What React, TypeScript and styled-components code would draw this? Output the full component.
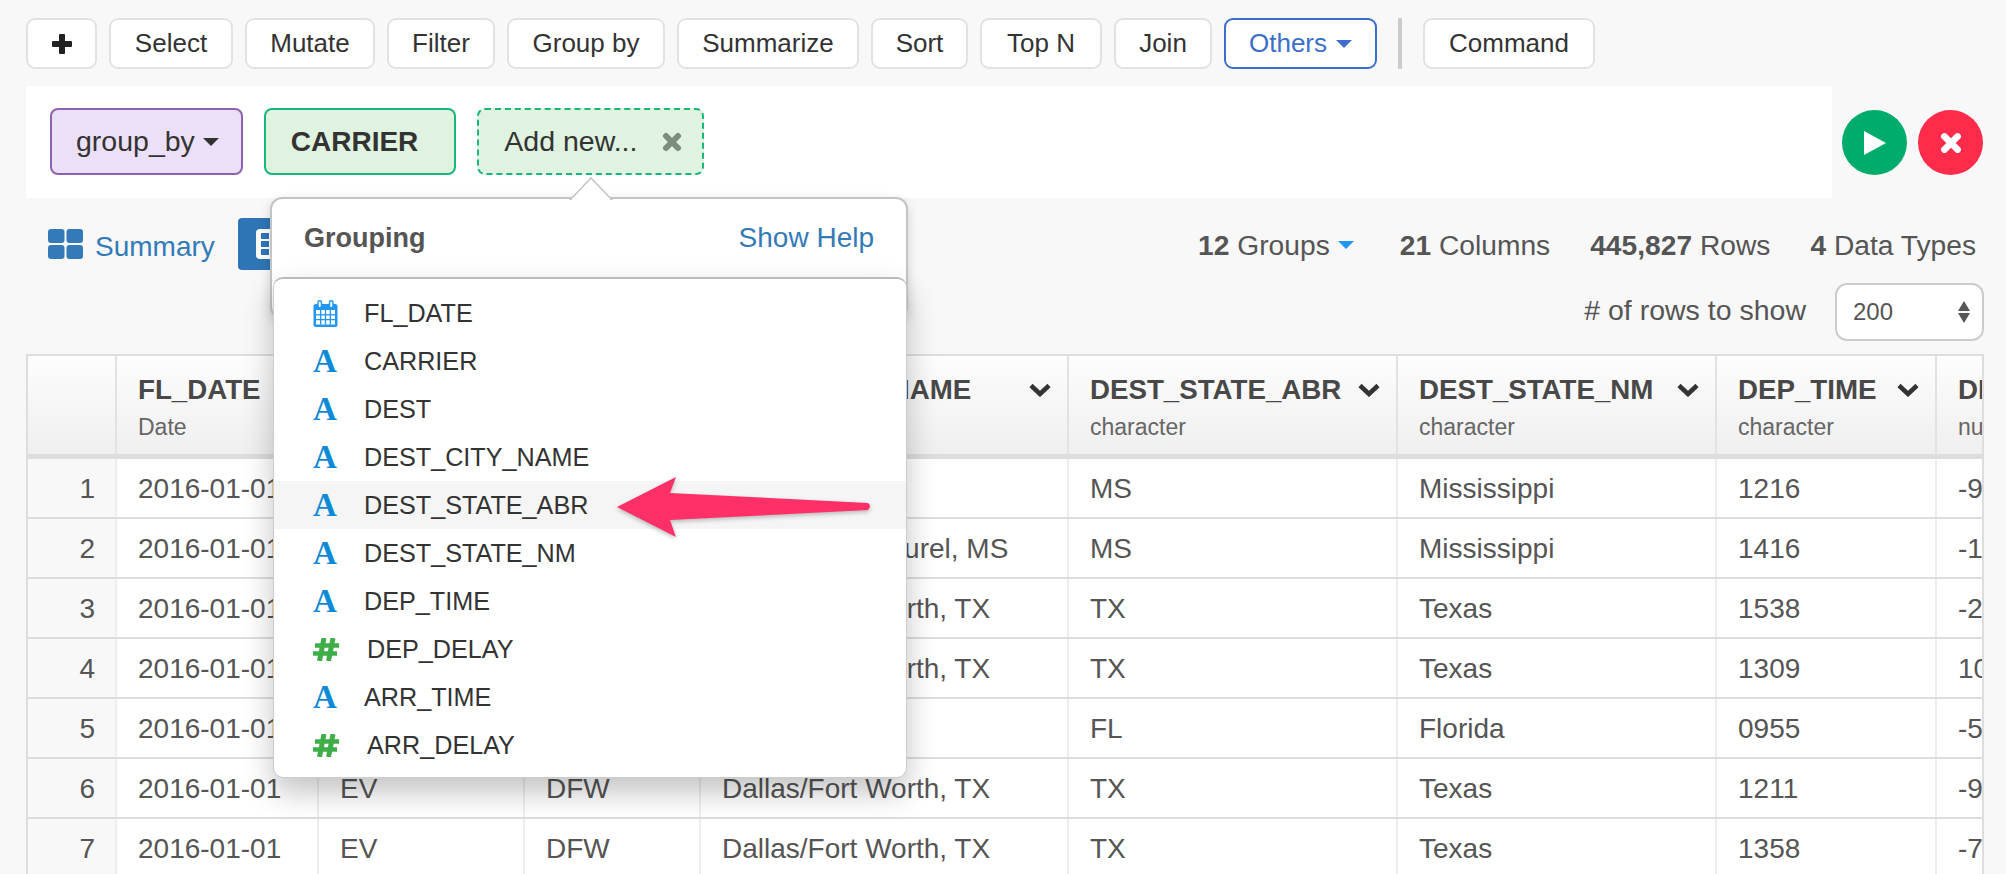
import styled, { createGlobalStyle } from "styled-components";

const GlobalStyle = createGlobalStyle`
    html, body {
        margin: 0;
        padding: 0;
        background: #f8f8f8;
    }
    body {
        font-family: "Liberation Sans", Arial, sans-serif;
        color: #333;
    }
`;

const Page = styled.div`
    position: relative;
    width: 2006px;
    height: 874px;
    overflow: hidden;
    padding: 18px 22px 0 26px;
    box-sizing: border-box;
`;

const Toolbar = styled.div`
    display: flex;
    align-items: stretch;
    gap: 12px;
    height: 51px;
`;

const ToolButton = styled.div<{ $width: number; $active?: boolean }>`
    display: flex;
    align-items: center;
    justify-content: center;
    gap: 9px;
    width: ${(p) => p.$width}px;
    box-sizing: border-box;
    background: #fff;
    border: 2px solid ${(p) => (p.$active ? "#3a6fc9" : "#e2e2e2")};
    border-radius: 9px;
    font-size: 26px;
    color: ${(p) => (p.$active ? "#3a6fc9" : "#333")};
`;

const ToolDivider = styled.div`
    width: 4px;
    margin: 0 9px;
    background: #ccc;
`;

const Caret = styled.span<{ $color: string }>`
    display: inline-block;
    width: 0;
    height: 0;
    border-left: 8px solid transparent;
    border-right: 8px solid transparent;
    border-top: 8px solid ${(p) => p.$color};
`;

const EditRow = styled.div`
    display: flex;
    gap: 10px;
    margin-top: 17px;
`;

const EditPanel = styled.div`
    display: flex;
    align-items: flex-start;
    gap: 21px;
    width: 1806px;
    height: 112px;
    padding: 22px 24px;
    box-sizing: border-box;
    background: #fff;
`;

const Token = styled.div<{ $kind: "verb" | "column" | "add" }>`
    display: flex;
    align-items: center;
    height: 67px;
    box-sizing: border-box;
    padding: ${(p) => (p.$kind === "column" ? "0 36px 0 25px" : p.$kind === "add" ? "0 20px 0 25px" : "0 22px 0 24px")};
    border-radius: 8px;
    font-size: ${(p) => (p.$kind === "column" ? "28px" : "28.5px")};
    color: #333;
    font-weight: ${(p) => (p.$kind === "column" ? "bold" : "normal")};
    background: ${(p) => (p.$kind === "verb" ? "#ece0f8" : "#dff3e0")};
    border: 2px ${(p) => (p.$kind === "add" ? "dashed" : "solid")} ${(p) => (p.$kind === "verb" ? "#8f62b0" : "#1ab57c")};
`;

const RemoveToken = styled.span`
    display: flex;
    margin-left: 25px;
`;

const RoundButtons = styled.div`
    display: flex;
    gap: 11px;
    margin-top: 24px;
`;

const RoundButton = styled.div<{ $color: string }>`
    display: flex;
    align-items: center;
    justify-content: center;
    width: 65px;
    height: 65px;
    border-radius: 50%;
    background: ${(p) => p.$color};
`;

const ViewRow = styled.div`
    display: flex;
    align-items: center;
    justify-content: space-between;
    height: 52px;
    margin-top: 20px;
    padding: 0 8px 0 22px;
`;

const ViewTabs = styled.div`
    display: flex;
    align-items: center;
`;

const SummaryLink = styled.div`
    display: flex;
    align-items: center;
    gap: 12px;
    width: 190px;
    font-size: 28px;
    color: #337ab7;
    span {
        padding-top: 5px;
    }
`;

const TableTab = styled.div`
    display: flex;
    align-items: center;
    gap: 12px;
    height: 52px;
    padding: 0 18px;
    border-radius: 4px;
    background: #2e75b6;
    font-size: 28px;
    color: #fff;
`;

const Stats = styled.div`
    display: flex;
    gap: 40px;
    padding-top: 2px;
    font-size: 28.2px;
    color: #555;
    b {
        font-weight: bold;
    }
`;

const GroupStat = styled.span`
    display: flex;
    align-items: center;
    gap: 8px;
    margin-right: 6px;
    white-space: pre;
`;

const RowsOption = styled.div`
    display: flex;
    align-items: center;
    justify-content: flex-end;
    gap: 29px;
    height: 58px;
    margin-top: 13px;
    font-size: 28.5px;
    color: #555;
`;

const RowsLabel = styled.span`
    padding-bottom: 4px;
`;

const RowsSelect = styled.div`
    display: flex;
    align-items: center;
    justify-content: space-between;
    width: 149px;
    height: 58px;
    box-sizing: border-box;
    padding: 0 12px 0 16px;
    background: #fff;
    border: 2px solid #ccc;
    border-radius: 12px;
    font-size: 24px;
`;

const TableBox = styled.div`
    width: 1958px;
    margin-top: 13px;
    overflow: hidden;
    border-top: 2px solid #ddd;
    border-left: 2px solid #ddd;
    border-right: 2px solid #ddd;
    box-sizing: border-box;
`;

const columns = "89px 202px 206px 176px 368px 329px 319px 220px 200px";

const HeadRow = styled.div`
    display: grid;
    grid-template-columns: ${columns};
    height: 98px;
    background: linear-gradient(#fdfdfd, #efefef);
`;

const HeadCell = styled.div`
    padding: 18px 16px 0 21px;
    border-right: 2px solid #e2e2e2;
    box-sizing: border-box;
    white-space: nowrap;
    overflow: hidden;
`;

const HeadName = styled.div`
    display: flex;
    align-items: center;
    justify-content: space-between;
    height: 32px;
    font-size: 27.7px;
    font-weight: bold;
    color: #484848;
`;

const HeadType = styled.div`
    margin-top: 7px;
    font-size: 23px;
    line-height: 28px;
    color: #666;
`;

const HeadRule = styled.div`
    height: 5px;
    background: #ddd;
`;

const BodyRow = styled.div`
    display: grid;
    grid-template-columns: ${columns};
    height: 60px;
    box-sizing: border-box;
    background: #fff;
    border-bottom: 2px solid #ddd;
`;

const Cell = styled.div`
    display: flex;
    align-items: center;
    padding: 2px 0 0 21px;
    border-right: 2px solid #eee;
    font-size: 28px;
    color: #555;
    white-space: nowrap;
    overflow: hidden;
`;

const IndexCell = styled(Cell)`
    justify-content: flex-end;
    padding: 2px 20px 0 0;
    background: #f8f8f8;
`;

const Popover = styled.div`
    position: absolute;
    left: 270px;
    top: 197px;
    width: 638px;
    height: 122px;
    box-sizing: border-box;
    background: #fff;
    border: 2px solid #c4c4c4;
    border-radius: 12px;
    box-shadow: 0 4px 12px rgba(0, 0, 0, 0.16);
`;

const PopoverTip = styled.svg`
    position: absolute;
    left: 297px;
    top: -22px;
`;

const PopoverHead = styled.div`
    display: flex;
    align-items: center;
    justify-content: space-between;
    height: 78px;
    padding: 0 32px;
`;

const PopoverTitle = styled.div`
    font-size: 27px;
    font-weight: bold;
    color: #555;
`;

const HelpLink = styled.div`
    font-size: 28px;
    color: #337ab7;
`;

const Menu = styled.div`
    position: absolute;
    left: 1px;
    top: 78px;
    width: 634px;
    height: 501px;
    box-sizing: border-box;
    padding: 10px 0 8px;
    background: #fff;
    border: 1px solid #ccc;
    border-top: 2px solid #bbb;
    border-radius: 10px;
    box-shadow: 0 14px 30px rgba(0, 0, 0, 0.24);
`;

const MenuItem = styled.div<{ $hover?: boolean }>`
    display: flex;
    align-items: center;
    height: 48px;
    padding-left: 39px;
    font-size: 25.2px;
    color: #333;
    background: ${(p) => (p.$hover ? "#f5f5f5" : "transparent")};
`;

const IconSlot = styled.span<{ $wide?: boolean }>`
    display: flex;
    align-items: center;
    width: ${(p) => (p.$wide ? "54px" : "51px")};
`;

const TextIcon = styled.span`
    font-family: "Liberation Serif", "Times New Roman", serif;
    font-weight: bold;
    font-size: 33px;
    line-height: 33px;
    color: #0d8ad6;
`;

const PinkArrow = styled.svg`
    position: absolute;
    left: 610px;
    top: 470px;
    filter: drop-shadow(0 2px 2px rgba(0, 0, 0, 0.25));
`;

const Chevron = () => (
    <svg width="22" height="14" viewBox="0 0 22 14">
        <polyline points="2,2.500 11,11 20,2.500" fill="none" stroke="#333" strokeWidth="4.500" />
    </svg>
);

const GridIcon = () => (
    <svg width="35" height="30" viewBox="0 0 35 30">
        <rect x="0" y="0" width="16.500" height="14" rx="3" fill="#337ab7" />
        <rect x="18.500" y="0" width="16.500" height="14" rx="3" fill="#337ab7" />
        <rect x="0" y="16" width="16.500" height="14" rx="3" fill="#337ab7" />
        <rect x="18.500" y="16" width="16.500" height="14" rx="3" fill="#337ab7" />
    </svg>
);

const TableIcon = () => (
    <svg width="30" height="30" viewBox="0 0 30 30">
        <rect x="0" y="0" width="30" height="30" rx="4" fill="#fff" />
        <g fill="#2e75b6">
            <rect x="5" y="4" width="8" height="6" />
            <rect x="15" y="4" width="10" height="6" />
            <rect x="5" y="12" width="8" height="6" />
            <rect x="15" y="12" width="10" height="6" />
            <rect x="5" y="20" width="8" height="6" />
            <rect x="15" y="20" width="10" height="6" />
        </g>
    </svg>
);

const CalendarIcon = () => (
    <svg width="25" height="27" viewBox="0 0 25 27">
        <rect x="0.500" y="4" width="24" height="23" rx="2.500" fill="#2196f3" />
        <rect x="5" y="0.800" width="3.500" height="7" rx="1.700" fill="#fff" stroke="#2196f3" strokeWidth="1.500" />
        <rect x="16.500" y="0.800" width="3.500" height="7" rx="1.700" fill="#fff" stroke="#2196f3" strokeWidth="1.500" />
        <rect x="3" y="10" width="19" height="14.500" fill="#fff" />
        <g stroke="#2196f3" strokeWidth="1.300">
            <line x1="7.700" y1="10" x2="7.700" y2="24.500" />
            <line x1="12.500" y1="10" x2="12.500" y2="24.500" />
            <line x1="17.300" y1="10" x2="17.300" y2="24.500" />
            <line x1="3" y1="14.800" x2="22" y2="14.800" />
            <line x1="3" y1="19.600" x2="22" y2="19.600" />
        </g>
    </svg>
);

const HashIcon = () => (
    <svg width="26" height="23" viewBox="0 0 26 23">
        <g stroke="#3fae49" fill="none">
            <line x1="11" y1="0" x2="6.500" y2="23" strokeWidth="5" />
            <line x1="20" y1="0" x2="15.500" y2="23" strokeWidth="5" />
            <line x1="2" y1="7.500" x2="26" y2="7.500" strokeWidth="4.500" />
            <line x1="0" y1="15.500" x2="24" y2="15.500" strokeWidth="4.500" />
        </g>
    </svg>
);

const CrossIcon = (props: { size: number; color: string }) => (
    <svg width={props.size} height={props.size} viewBox="0 0 20 20">
        <g stroke={props.color} strokeWidth="6" strokeLinecap="round">
            <line x1="4" y1="4" x2="16" y2="16" />
            <line x1="16" y1="4" x2="4" y2="16" />
        </g>
    </svg>
);

const PlusIcon = () => (
    <svg width="20" height="20" viewBox="0 0 20 20">
        <rect x="7" y="0" width="6" height="20" rx="1" fill="#222" />
        <rect x="0" y="7" width="20" height="6" rx="1" fill="#222" />
    </svg>
);

const SpinIcon = () => (
    <svg width="12" height="22" viewBox="0 0 12 22">
        <polygon points="6,0 12,10 0,10" fill="#555" />
        <polygon points="0,12 12,12 6,22" fill="#555" />
    </svg>
);

const headers = [
    { name: "", type: "" },
    { name: "FL_DATE", type: "Date" },
    { name: "CARRIER", type: "character" },
    { name: "DEST", type: "character" },
    { name: "DEST_CITY_NAME", type: "character" },
    { name: "DEST_STATE_ABR", type: "character" },
    { name: "DEST_STATE_NM", type: "character" },
    { name: "DEP_TIME", type: "character" },
    { name: "DEP_DELAY", type: "numeric" },
];

const rows = [
    ["1", "2016-01-01", "EV", "JAN", "Jackson, MS", "MS", "Mississippi", "1216", "-9"],
    ["2", "2016-01-01", "EV", "PIB", "Hattiesburg/Laurel, MS", "MS", "Mississippi", "1416", "-14"],
    ["3", "2016-01-01", "EV", "DFW", "Dallas/Fort Worth, TX", "TX", "Texas", "1538", "-2"],
    ["4", "2016-01-01", "EV", "DFW", "Dallas/Fort Worth, TX", "TX", "Texas", "1309", "10"],
    ["5", "2016-01-01", "EV", "VPS", "Valparaiso, FL", "FL", "Florida", "0955", "-5"],
    ["6", "2016-01-01", "EV", "DFW", "Dallas/Fort Worth, TX", "TX", "Texas", "1211", "-9"],
    ["7", "2016-01-01", "EV", "DFW", "Dallas/Fort Worth, TX", "TX", "Texas", "1358", "-7"],
];

const menuItems = [
    { name: "FL_DATE", kind: "date" },
    { name: "CARRIER", kind: "text" },
    { name: "DEST", kind: "text" },
    { name: "DEST_CITY_NAME", kind: "text" },
    { name: "DEST_STATE_ABR", kind: "text" },
    { name: "DEST_STATE_NM", kind: "text" },
    { name: "DEP_TIME", kind: "text" },
    { name: "DEP_DELAY", kind: "number" },
    { name: "ARR_TIME", kind: "text" },
    { name: "ARR_DELAY", kind: "number" },
];

const tools = [
    { label: "Select", width: 124 },
    { label: "Mutate", width: 130 },
    { label: "Filter", width: 108 },
    { label: "Group by", width: 158 },
    { label: "Summarize", width: 182 },
    { label: "Sort", width: 97 },
    { label: "Top N", width: 122 },
    { label: "Join", width: 98 },
];

export default function App() {
    return (
        <Page>
            <GlobalStyle />
            <Toolbar>
                <ToolButton $width={71}><PlusIcon /></ToolButton>
                {tools.map((t) => (
                    <ToolButton key={t.label} $width={t.width}>{t.label}</ToolButton>
                ))}
                <ToolButton $width={153} $active>Others <Caret $color="#3a6fc9" /></ToolButton>
                <ToolDivider />
                <ToolButton $width={172}>Command</ToolButton>
            </Toolbar>

            <EditRow>
                <EditPanel>
                    <Token $kind="verb">group_by&nbsp;<Caret $color="#333" /></Token>
                    <Token $kind="column">CARRIER</Token>
                    <Token $kind="add">
                        Add new...
                        <RemoveToken><CrossIcon size={20} color="#7c8c80" /></RemoveToken>
                    </Token>
                </EditPanel>
                <RoundButtons>
                    <RoundButton $color="#00ac6b">
                        <svg width="24" height="26" viewBox="0 0 24 26">
                            <polygon points="1,1 23,13 1,25" fill="#fff" />
                        </svg>
                    </RoundButton>
                    <RoundButton $color="#ff2b4b">
                        <CrossIcon size={22} color="#fff" />
                    </RoundButton>
                </RoundButtons>
            </EditRow>

            <ViewRow>
                <ViewTabs>
                    <SummaryLink><GridIcon /><span>Summary</span></SummaryLink>
                    <TableTab><TableIcon />Table</TableTab>
                </ViewTabs>
                <Stats>
                    <GroupStat><span><b>12</b> Groups</span><Caret $color="#2196f3" /></GroupStat>
                    <span><b>21</b> Columns</span>
                    <span><b>445,827</b> Rows</span>
                    <span><b>4</b> Data Types</span>
                </Stats>
            </ViewRow>

            <RowsOption>
                <RowsLabel># of rows to show</RowsLabel>
                <RowsSelect>200<SpinIcon /></RowsSelect>
            </RowsOption>

            <TableBox>
                <HeadRow>
                    {headers.map((h, i) => (
                        <HeadCell key={i}>
                            {h.name && (
                                <HeadName>
                                    {h.name}
                                    {i > 1 && i < 8 && <Chevron />}
                                </HeadName>
                            )}
                            <HeadType>{h.type}</HeadType>
                        </HeadCell>
                    ))}
                </HeadRow>
                <HeadRule />
                {rows.map((row) => (
                    <BodyRow key={row[0]}>
                        {row.map((value, i) =>
                            i === 0 ? <IndexCell key={i}>{value}</IndexCell> : <Cell key={i}>{value}</Cell>
                        )}
                    </BodyRow>
                ))}
            </TableBox>

            <Popover>
                <PopoverTip width="44" height="23" viewBox="0 0 44 23">
                    <polygon points="1,23 22,1 43,23" fill="#fff" stroke="#c4c4c4" strokeWidth="1.500" />
                    <rect x="3" y="21" width="38" height="3" fill="#fff" />
                </PopoverTip>
                <PopoverHead>
                    <PopoverTitle>Grouping</PopoverTitle>
                    <HelpLink>Show Help</HelpLink>
                </PopoverHead>
                <Menu>
                    {menuItems.map((item) => (
                        <MenuItem key={item.name} $hover={item.name === "DEST_STATE_ABR"}>
                            <IconSlot $wide={item.kind === "number"}>
                                {item.kind === "date" && <CalendarIcon />}
                                {item.kind === "text" && <TextIcon>A</TextIcon>}
                                {item.kind === "number" && <HashIcon />}
                            </IconSlot>
                            {item.name}
                        </MenuItem>
                    ))}
                </Menu>
            </Popover>

            <PinkArrow width="270" height="76" viewBox="0 0 270 76">
                <path
                    d="M7 37 L66 7 L60 23 L258 33 Q262 36 258 40 L60 50 L66 67 Z"
                    fill="#ff3068"
                />
            </PinkArrow>
        </Page>
    );
}
